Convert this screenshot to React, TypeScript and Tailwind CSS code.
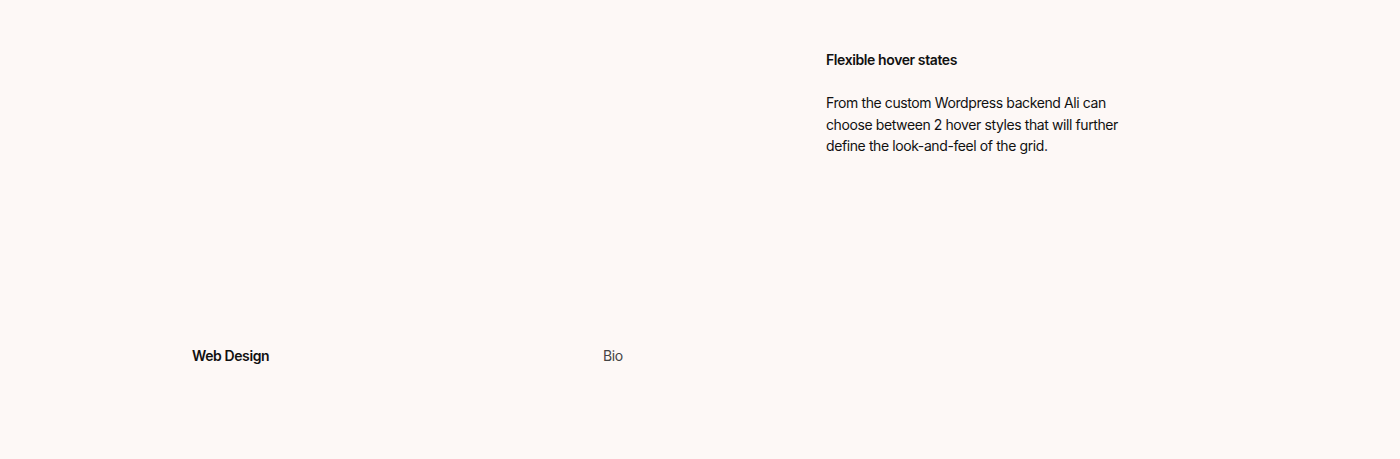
export default function App() {
  return (
    <div
      className="flex h-[459px] w-[1400px] flex-col bg-[#fdf8f6] text-[14px] tracking-[-0.4px] text-[#111111]"
      style={{ fontFamily: "Inter, 'Liberation Sans', sans-serif" }}
    >
      <div className="flex pl-[826px] pt-[50px]">
        <div className="flex w-[300px] flex-col">
          <h3 className="font-semibold leading-[19px]">Flexible hover states</h3>
          <p className="mt-[23px] leading-[21.5px]">
            From the custom Wordpress backend Ali can choose between 2 hover styles that will further
            define the look-and-feel of the grid.
          </p>
        </div>
      </div>
      <div className="mt-auto mb-[93px] flex pl-[192px]">
        <span className="w-[411px] font-semibold">Web Design</span>
        <span className="text-[#444444]">Bio</span>
      </div>
    </div>
  );
}
